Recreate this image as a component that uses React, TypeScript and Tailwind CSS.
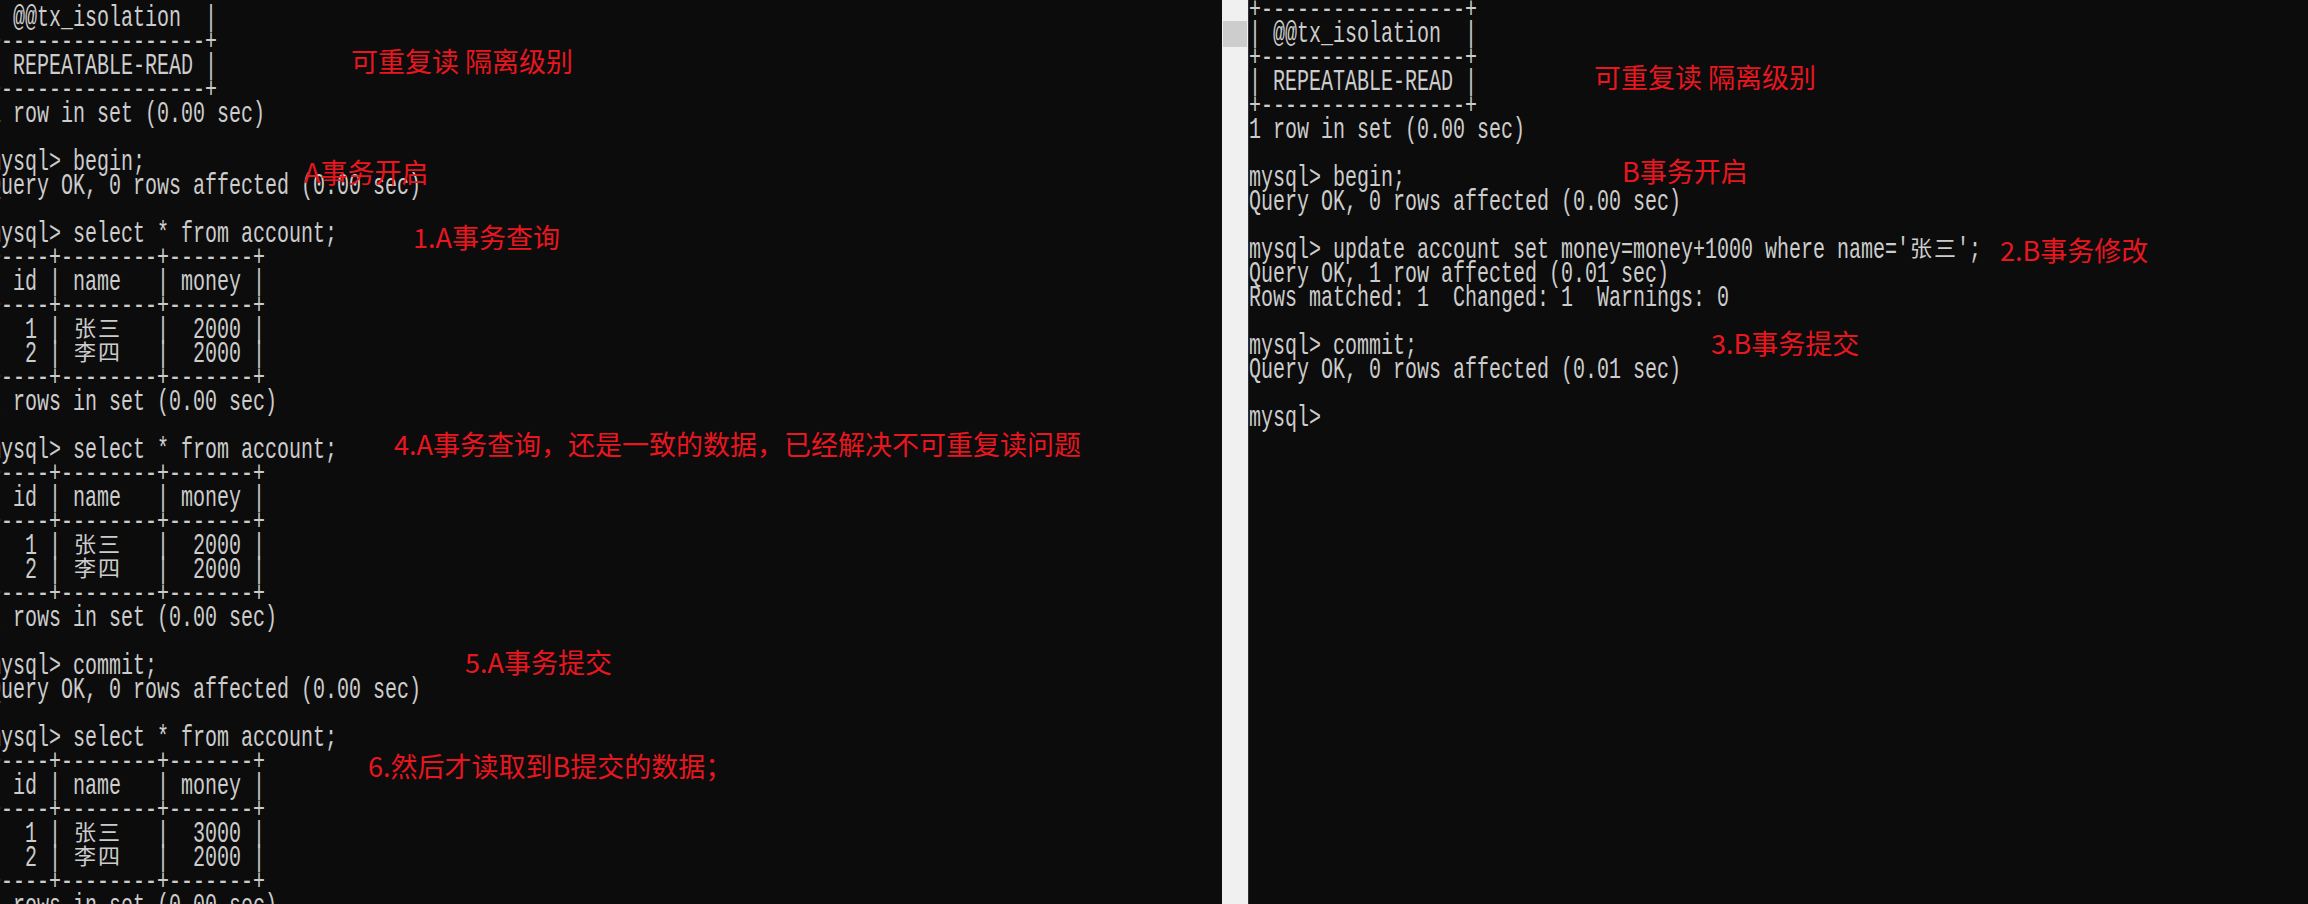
const leftLines = [
  '| @@tx_isolation  |',
  '+-----------------+',
  '| REPEATABLE-READ |',
  '+-----------------+',
  '1 row in set (0.00 sec)',
  '',
  'mysql> begin;',
  'Query OK, 0 rows affected (0.00 sec)',
  '',
  'mysql> select * from account;',
  '+----+--------+-------+',
  '| id | name   | money |',
  '+----+--------+-------+',
  '|  1 | 张三   |  2000 |',
  '|  2 | 李四   |  2000 |',
  '+----+--------+-------+',
  '2 rows in set (0.00 sec)',
  '',
  'mysql> select * from account;',
  '+----+--------+-------+',
  '| id | name   | money |',
  '+----+--------+-------+',
  '|  1 | 张三   |  2000 |',
  '|  2 | 李四   |  2000 |',
  '+----+--------+-------+',
  '2 rows in set (0.00 sec)',
  '',
  'mysql> commit;',
  'Query OK, 0 rows affected (0.00 sec)',
  '',
  'mysql> select * from account;',
  '+----+--------+-------+',
  '| id | name   | money |',
  '+----+--------+-------+',
  '|  1 | 张三   |  3000 |',
  '|  2 | 李四   |  2000 |',
  '+----+--------+-------+',
  '2 rows in set (0.00 sec)',
]

const rightLines = [
  '+-----------------+',
  '| @@tx_isolation  |',
  '+-----------------+',
  '| REPEATABLE-READ |',
  '+-----------------+',
  '1 row in set (0.00 sec)',
  '',
  'mysql> begin;',
  'Query OK, 0 rows affected (0.00 sec)',
  '',
  "mysql> update account set money=money+1000 where name='张三';",
  'Query OK, 1 row affected (0.01 sec)',
  'Rows matched: 1  Changed: 1  Warnings: 0',
  '',
  'mysql> commit;',
  'Query OK, 0 rows affected (0.01 sec)',
  '',
  'mysql>',
]

const leftNotes = [
  { text: '可重复读 隔离级别', className: 'left-[351px] top-[47px]' },
  { text: 'A事务开启', className: 'left-[304px] top-[158px]' },
  { text: '1.A事务查询', className: 'left-[413px] top-[223px]' },
  { text: '4.A事务查询，还是一致的数据，已经解决不可重复读问题', className: 'left-[394px] top-[430px]' },
  { text: '5.A事务提交', className: 'left-[465px] top-[648px]' },
  { text: '6.然后才读取到B提交的数据；', className: 'left-[368px] top-[752px]' },
]

const rightNotes = [
  { text: '可重复读 隔离级别', className: 'left-[345px] top-[63px]' },
  { text: 'B事务开启', className: 'left-[373px] top-[157px]' },
  { text: '2.B事务修改', className: 'left-[751px] top-[236px]' },
  { text: '3.B事务提交', className: 'left-[462px] top-[329px]' },
]

// split a console line into ascii runs and double-width cjk cells
function splitLine(line: string) {
  const parts: { text: string; wide: boolean }[] = []
  for (const ch of line) {
    const wide = /[\u3000-\u9fff\uff00-\uffef]/.test(ch)
    const last = parts[parts.length - 1]
    if (!wide && last && !last.wide) last.text += ch
    else parts.push({ text: ch, wide })
  }
  return parts
}

function TermLine({ line }: { line: string }) {
  return (
    <div className="h-[24px] whitespace-pre leading-[24px]">
      {splitLine(line).map((part, i) =>
        part.wide ? (
          <span
            key={i}
            className="inline-block h-[24px] w-[24px] -translate-y-[4px] align-top text-center font-['Noto_Sans_CJK_SC',sans-serif] text-[22px] leading-[24px]"
          >
            {part.text}
          </span>
        ) : (
          <span key={i} className="inline-block h-[24px] align-top leading-[24px] scale-y-150">
            {part.text}
          </span>
        )
      )}
    </div>
  )
}

function Note({ text, className }: { text: string; className: string }) {
  return (
    <div
      className={`absolute whitespace-pre font-['Noto_Sans_CJK_SC',sans-serif] text-[27px] leading-[27px] text-[#e8161f] ${className}`}
    >
      {text}
    </div>
  )
}

export default function App() {
  return (
    <div className="flex h-[904px] w-[2308px] overflow-hidden bg-[#0c0c0c] font-['Liberation_Mono','Noto_Sans_CJK_SC',monospace] text-[20px] text-[#cccccc]">
      <div className="relative h-full w-[1222px] shrink-0 overflow-hidden">
        <div className="-ml-[11px] pt-[6px]">
          {leftLines.map((line, i) => (
            <TermLine key={i} line={line} />
          ))}
        </div>
        {leftNotes.map((note) => (
          <Note key={note.text} {...note} />
        ))}
      </div>

      <div className="h-full w-[26px] shrink-0 bg-[#f0f0f0] pt-[21px]">
        <div className="mx-px h-[26px] bg-[#cdcdcd]" />
      </div>

      <div className="relative h-full flex-1 overflow-hidden border-l border-[#303030]">
        <div className="-mt-[2px]">
          {rightLines.map((line, i) => (
            <TermLine key={i} line={line} />
          ))}
        </div>
        {rightNotes.map((note) => (
          <Note key={note.text} {...note} />
        ))}
      </div>
    </div>
  )
}
